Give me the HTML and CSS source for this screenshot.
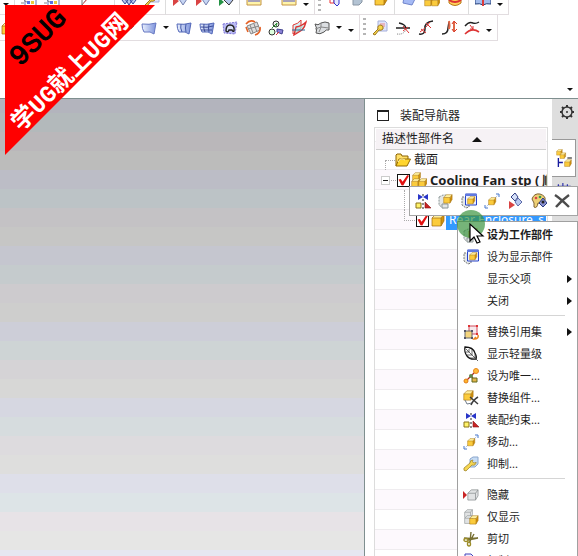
FILE: index.html
```html
<!DOCTYPE html>
<html lang="zh-CN">
<head>
<meta charset="utf-8">
<title>装配导航器</title>
<link rel="stylesheet" href="styles.css">
</head>
<body>
<svg class="defs" aria-hidden="true">
  <defs>
    <linearGradient id="blue" x1="0" y1="0" x2="1" y2="0"><stop offset="0" stop-color="#e9f0fd"/><stop offset="1" stop-color="#7d93dc"/></linearGradient>
    <g id="cube"><path d="M1 5 5 1h8l-3 4z" fill="#fff0a0"/><path d="M1 5h9v8H1z" fill="#fbcb3c"/><path d="M10 5l3-4v7l-3 5z" fill="#d0920f"/><path d="M1 5 5 1h8v7l-3 5H1zM1 5h9v8M10 5l3-4" fill="none" stroke="#a06c08" stroke-width=".7"/></g>
    <g id="ghost"><path d="M1 5 5 1h8v7l-3 5H1z" fill="#e1e3e4"/><path d="M1 5 5 1h8v7l-3 5H1zM1 5h9v8M10 5l3-4" fill="none" stroke="#8b9092" stroke-width=".9"/></g>
  </defs>
  <symbol id="i-cube" viewBox="0 0 16 16"><use href="#cube" x="1" y="1"/></symbol>
  <symbol id="i-cubes" viewBox="0 0 16 16"><use href="#cube" transform="translate(1 0) scale(.65)"/><use href="#cube" transform="translate(0 6) scale(.68)"/><use href="#cube" transform="translate(7 6) scale(.68)"/></symbol>
  <symbol id="i-folder" viewBox="0 0 16 16"><path d="M1 14V3l1-1h4l1 2h6v3" fill="#ffdf68" stroke="#8b6200"/><path d="M1 14 4 7h11.500l-3.500 7z" fill="#ffd52d" stroke="#946b00"/><path d="M3 10c2-4 5-3 7-2" stroke="#fff6bf" fill="none"/></symbol>
  <symbol id="i-surf" viewBox="0 0 16 16"><path d="M1 4q7 1 14-1l-2 11q-3-3-10-2-2-3-2-8z" fill="url(#blue)" stroke="#6577c2"/></symbol>
  <symbol id="i-surf2" viewBox="0 0 16 16"><path d="M1 4q7 1 14-1l-2 11q-3-3-10-2-2-3-2-8z" fill="url(#blue)" stroke="#5368b9"/><path d="M5 4q-1 4 1 8M10 4q-1 4 0 8" fill="none" stroke="#4259aa"/></symbol>
  <symbol id="i-mesh" viewBox="0 0 16 16"><path d="M1 4q7 1 14-1l-2 11q-3-3-10-2-2-3-2-8z" fill="url(#blue)" stroke="#5368b9"/><path d="M5 4q-1 4 1 8M10 4q-1 4 0 8M2 7q6 1 12-1M2 10q6 0 11 0" fill="none" stroke="#3a4b98"/></symbol>
  <symbol id="i-patch" viewBox="0 0 16 16"><path d="M1 4 15 2l-2 12-11-1z" fill="#b8b9f5" stroke="#8076d5" stroke-dasharray="2 1"/><path d="M4 11q0-6 4-6 5 0 4 6-1 1-2-1H7q-1 3-3 1z" fill="#d8def7" stroke="#222" stroke-width="1.400"/></symbol>
  <symbol id="i-rough" viewBox="0 0 16 16"><path d="M2 6 12 2l3 8-9 4z" fill="#ddd" stroke="#888"/><path d="M5 5l3 8M9 4l3 8M3 9l11-3" stroke="#888" fill="none"/><path d="M1 4q4-5 9-2M15 7q1 6-5 8M1 7l2 5" fill="none" stroke="#e36025" stroke-width="1.600"/></symbol>
  <symbol id="i-trans" viewBox="0 0 16 16"><circle cx="8" cy="4" r="3" fill="#eee" stroke="#333"/><circle cx="4" cy="12" r="3" fill="#dfd" stroke="#333"/><path d="M4 8l5-5-1 4" fill="none" stroke="#2a8e31"/><path d="M9 9l6 1-1 4-5-2z" fill="#8d83d8" stroke="#40418d"/><path d="M11 12l-3 3" stroke="#d33"/></symbol>
  <symbol id="i-cross" viewBox="0 0 16 16"><path d="M2 5q5-1 8-5v8q-3 5-8 6z" fill="#d7f0f5" stroke="#e13a34"/><path d="M5 7q6-1 10-5-1 5-4 8-3 2-8 5z" fill="#b3e2de" fill-opacity=".7" stroke="#dc3131" stroke-width="1.300"/><path d="M1 10h13" stroke="#2c6f9d"/></symbol>
  <symbol id="i-sheet" viewBox="0 0 16 16"><path d="M1 4q3 2 6-1 4-2 8 0v7q-3-1-5 2-4 3-8 1 2-4-1-9z" fill="#dcdfe2" stroke="#555"/><path d="M7 3q1 4-2 9M1 9l6-2 8 1" fill="none" stroke="#888"/></symbol>
  <symbol id="i-keydoc" viewBox="0 0 16 16"><path d="M6 1h7l2 2v8H6z" fill="#dfe4fb" stroke="#a5afdb"/><path d="M8 4h5M8 6h5" stroke="#e88"/><path d="M1 14l5-5q-1-4 3-4 3 1 2 4-2 2-4 1l-4 5z" fill="#f7d64a" stroke="#9b7620"/></symbol>
  <symbol id="i-trim" viewBox="0 0 16 16"><path d="M1 8h14M4 3q6 1 7 5" fill="none" stroke="#222" stroke-width="1.300"/><path d="M2 14q7 1 9-5" fill="none" stroke="#777" stroke-dasharray="1 1"/><path d="M8 6l6 7M13 7l-5 4" stroke="#d33"/></symbol>
  <symbol id="i-divide" viewBox="0 0 16 16"><path d="M1 14q6 1 6-5Q6 2 15 1" fill="none" stroke="#222" stroke-width="1.500"/><path d="M8 3l5 5M12 2l-4 5M3 9l5 4M7 8l-5 4" stroke="#d33"/></symbol>
  <symbol id="i-length" viewBox="0 0 16 16"><path d="M1 14q6 0 6-6l1-6" fill="none" stroke="#222" stroke-width="1.500"/><path d="M8 9q1-3 0-8M13 2v9" fill="none" stroke="#df6848" stroke-width="2"/><path d="M11 4l2-3 3 3M11 9l2 3 3-3" fill="none" stroke="#da3a29"/></symbol>
  <symbol id="i-bridge" viewBox="0 0 16 16"><path d="M1 6q4-5 8-3 3 1 6-1" fill="none" stroke="#222" stroke-width="1.400"/><path d="M1 14q7-7 14-2" fill="none" stroke="#d33" stroke-width="1.600"/><path d="M6 5l3 4M9 6v3H6" fill="none" stroke="#d33"/></symbol>
  <symbol id="i-list" viewBox="0 0 16 16"><path d="M4 2h11v13H4z" fill="#fff" stroke="#6474b8"/><path d="M6 5h3v3H6zM10 5h3v3h-3zM6 10h3v3H6zM10 10h3v3h-3z" fill="#586fe4"/><path d="M10 10h3v3h-3z" fill="#eacb3e"/><path d="M0 5q3 0 3 3t3 3M0 12h3" fill="none" stroke="#888"/></symbol>
  <symbol id="i-pencil" viewBox="0 0 16 16"><path d="M3 14V4M3 14l7-9 3-3" fill="none" stroke="#777"/><path d="M4 13l8-9" stroke="#e77"/></symbol>
  <symbol id="i-dia" viewBox="0 0 16 16"><path d="M4 8l4-5 4 5-4 6zM1 9l3-4 3 4-3 4zM9 9l3-4 3 4-3 4z" fill="#b9c8ef" stroke="#334a9b"/></symbol>
  <symbol id="i-diared" viewBox="0 0 16 16"><path d="M3 4l4-4 3 4-3 4z" fill="#d5e0f8" stroke="#333f84"/><path d="M7 9l3-4 4 4-4 4z" fill="#b9c9f0" stroke="#5c6aa8"/><path d="M1 8l6 4-6 4z" fill="#d94343"/></symbol>
  <symbol id="i-diahide" viewBox="0 0 16 16"><path d="M1 6l6 4-6 5z" fill="#d94343"/><path d="M7 8l4-5 4 5-4 6z" fill="#c7d6f4" stroke="#737fae"/></symbol>
  <symbol id="i-diagreen" viewBox="0 0 16 16"><path d="M1 7l5 4-5 4z" fill="#249245"/><path d="M6 9l5-6 4 6-4 5z" fill="#b6c7ed" stroke="#333"/></symbol>
  <symbol id="i-ruler" viewBox="0 0 16 16"><path d="M1 8h14v6H1z" fill="#fff4a9" stroke="#c39444"/><path d="M3 9v2M5 9v2M7 9v2M9 9v2M11 9v2M13 9v2" stroke="#4e4ec7"/></symbol>
  <symbol id="i-tubes" viewBox="0 0 16 16"><path d="M3 0h4v12H3z" fill="#fff" stroke="#e33"/><path d="M7 3h5v10l-2 2-3-3z" fill="#e4e8ff" stroke="#33c"/></symbol>
  <symbol id="i-slab" viewBox="0 0 16 16"><path d="M3 1h9v10l-3 3H3z" fill="#b3c3d3" stroke="#8996a4"/></symbol>
  <symbol id="i-bluebox" viewBox="0 0 16 16"><path d="M3 6 9 1l6 5-4 8-9-2z" fill="#a5baf5" stroke="#6f84cb"/></symbol>
  <symbol id="i-can" viewBox="0 0 16 16"><path d="M2 2h12v10q-6 5-12 0z" fill="#ffd15a" stroke="#b77716"/><path d="M2 9q6 4 12 0" fill="none" stroke="#dd3333" stroke-width="2"/><path d="M2 5q6 4 12 0" fill="none" stroke="#4c70d6" stroke-width="2"/></symbol>
  <symbol id="i-book" viewBox="0 0 16 16"><path d="M0 2q5-2 8 2 3-4 8-2v11q-5-1-8 1-3-2-8-1z" fill="#a4bded" stroke="#203c77"/><path d="M8 2v13" stroke="#dd3b3b" stroke-width="2"/></symbol>
  <symbol id="i-constraint" viewBox="0 0 16 16"><path d="M3 1v6l5-3zM13 1v6L8 4z" fill="#2835c8"/><path d="M8 1v2M8 6v2M8 10v2M8 14v2" stroke="#222"/><path d="M1 10h5v5H1z" fill="#fff36a" stroke="#897218"/><path d="M10 9v6h6z" fill="#c82424" stroke="#8b1616" stroke-width=".6"/></symbol>
  <symbol id="i-work" viewBox="0 0 16 16"><path d="M1 4l4-2h4v12l-4 1-4-3z" fill="#e3e6e6" stroke="#8b9696" stroke-dasharray="2 1"/><path d="M4 11h6v4H4z" fill="#e3e6e6" stroke="#8b9696"/><use href="#cube" transform="translate(5 1) scale(.7)"/></symbol>
  <symbol id="i-display" viewBox="0 0 16 16"><path d="M1 4h7v10l-3 1-4-3z" fill="#e4e8e8" stroke="#777" stroke-dasharray="2 1"/><path d="M4.500 1h11v11h-11z" fill="#edf2ff" stroke="#2743c9"/><path d="M4 1h12v2H4z" fill="#6079df"/><use href="#cube" transform="translate(6 3) scale(.6)"/></symbol>
  <symbol id="i-move" viewBox="0 0 16 16"><path d="M12 1h3v3M1 12v3h3" fill="none" stroke="#4675ca"/><path d="M11 5l4-4M5 11l-4 4" stroke="#70a0e2" stroke-dasharray="1 1"/><use href="#cube" transform="translate(4 4) scale(.6)"/></symbol>
  <symbol id="i-palette" viewBox="0 0 16 16"><path d="M1 6Q3 0 9 1q6 2 5 6-2 5-7 3-1 6-4 4 1-4-2-8z" fill="#eed075" stroke="#7c6030"/><circle cx="5" cy="5" r="1.300" fill="#d44"/><circle cx="9" cy="4" r="1.300" fill="#399b49"/><path d="M8 10l4-5 4 5-4 4z" fill="#8a91d1" stroke="#2a3c84"/><circle cx="12" cy="9" r="1.500" fill="#222"/></symbol>
  <symbol id="i-x" viewBox="0 0 16 16"><path d="M1 2Q7 6 15 14M15 2Q8 7 2 14" fill="none" stroke="#4c4c4c" stroke-width="2.400"/></symbol>
  <symbol id="i-refset" viewBox="0 0 16 16"><path d="M6 2h8v8H6z" fill="#f7e9ec" stroke="#d34a5a"/><path d="M5 1h2v2H5zM13 1h2v2h-2zM13 9h2v2h-2z" fill="#d33"/><path d="M2 7h7v7H2z" fill="#f5d57d" stroke="#65696c"/><path d="M1 6h2v2H1zM8 6h2v2H8zM1 13h2v2H1zM8 13h2v2H8z" fill="#556"/><path d="M15 11q1 4-4 4l2-2" fill="none" stroke="#ea841e" stroke-width="1.500"/></symbol>
  <symbol id="i-feather" viewBox="0 0 16 16"><path d="M2 1Q10 1 12 7q2 4 1 6-6 1-9-3Q1 6 2 1z" fill="#fff" stroke="#111" stroke-width="1.300"/><path d="M3 3l12 12M6 3v3H3M9 4v5H4M12 7v5H7" fill="none" stroke="#444" stroke-width=".8"/></symbol>
  <symbol id="i-unique" viewBox="0 0 16 16"><path d="M3 13l5-5 5-5M8 8l4 5" fill="none" stroke="#b52d20" stroke-width="1.300"/><circle cx="3" cy="13" r="2" fill="#ffb52c" stroke="#e07a15"/><circle cx="13" cy="3" r="2.500" fill="#ffbd3b" stroke="#e8861c"/><circle cx="8" cy="8" r="2" fill="#5e874a"/><path d="M9 10h5v4H9z" fill="#e3b54b" stroke="#60691e"/></symbol>
  <symbol id="i-replace" viewBox="0 0 16 16"><use href="#cube" transform="translate(0 0) scale(.78)"/><path d="M2 10l2 4 5-1" fill="none" stroke="#707c8a"/><path d="M7 7l8 7M15 7q-5 3-7 8" fill="none" stroke="#3d3d3d" stroke-width="1.500"/></symbol>
  <symbol id="i-suppress" viewBox="0 0 16 16"><path d="M7 3l3-2h5v7l-3 3H7z" fill="#c6dcf5" stroke="#8ba6cc"/><path d="M1 12l6-5q0-3 3-3-2 2 1 3 2 0 2-1 0 4-4 3l-6 6q-3 0-2-3z" fill="#f6d650" stroke="#a38a34" stroke-width=".8"/></symbol>
  <symbol id="i-hide" viewBox="0 0 16 16"><path d="M0 4l4 4-4 4z" fill="#c92525"/><use href="#ghost" transform="translate(4 2) scale(.85)"/></symbol>
  <symbol id="i-only" viewBox="0 0 16 16"><use href="#ghost" transform="translate(1 0) scale(.65)"/><use href="#ghost" transform="translate(1 6) scale(.65)"/><use href="#cube" transform="translate(6 6) scale(.7)"/></symbol>
  <symbol id="i-cut" viewBox="0 0 16 16"><path d="M1 7q6 1 14 0L5 9M8 1l-1 10M11 3l-5 9" fill="none" stroke="#777032" stroke-width="1.400"/><ellipse cx="3" cy="9" rx="2" ry="1.500" fill="none" stroke="#9c8c27" stroke-width="1.400"/><ellipse cx="6" cy="13" rx="1.500" ry="2" fill="none" stroke="#9c8c27" stroke-width="1.400"/></symbol>
  <symbol id="i-copy" viewBox="0 0 16 16"><path d="M2 1h6l2 2v8H2z" fill="#eef" stroke="#44b"/><path d="M6 5h6l2 2v8H6z" fill="#eef" stroke="#44b"/></symbol>
  <symbol id="i-gear" viewBox="0 0 16 16"><path d="M8 1v2M8 13v2M1 8h2M13 8h2M3 3l1.500 1.500M11.500 11.500 13 13M13 3l-1.500 1.500M4.500 11.500 3 13" stroke="#333" stroke-width="2"/><circle cx="8" cy="8" r="5" fill="none" stroke="#333" stroke-width="1.500"/><circle cx="8" cy="8" r="1" fill="#333"/></symbol>
  <symbol id="i-tree" viewBox="0 0 16 16"><use href="#cube" transform="translate(1 0) scale(.42)"/><use href="#cube" transform="translate(4 3) scale(.42)"/><path d="M3 8v8M3 12h4" stroke="#171b9e" stroke-width="1.200"/><path d="M11 8h4" stroke="#222"/><use href="#cube" transform="translate(8 9) scale(.5)"/></symbol>
  <symbol id="i-dots" viewBox="0 0 16 16"><path d="M3 1v4M7 0v4M11 1v4M2 3h12" stroke="#272caa"/><path d="M4 7h8v6H4z" fill="#ddd" stroke="#558"/></symbol>
  <symbol id="i-disk" viewBox="0 0 16 16"><path d="M3 3q5-3 10 0v9q-5 3-10 0z" fill="#d994b6" stroke="#98235c" stroke-width="1.500"/></symbol>
</svg>

<header class="ribbon">
  <div class="bar bar-clipped" role="toolbar" aria-label="标准">
    <div class="group">
      <span class="drop"></span><i class="sep"></i>
      <button class="tool" aria-label="表"><svg><use href="#i-list"/></svg></button>
      <button class="tool" aria-label="表格"><svg><use href="#i-list"/></svg></button>
      <button class="tool pad" aria-label="草图"><svg><use href="#i-pencil"/></svg></button>
      <i class="sep wide"></i>
      <button class="tool" aria-label="显示"><svg><use href="#i-dia"/></svg></button>
      <button class="tool" aria-label="编辑"><svg><use href="#i-keydoc"/></svg></button>
      <i class="sep"></i>
      <button class="tool" aria-label="隐藏"><svg><use href="#i-diahide"/></svg></button>
      <button class="tool" aria-label="反转"><svg><use href="#i-diahide"/></svg></button>
      <button class="tool" aria-label="全部显示"><svg><use href="#i-diagreen"/></svg></button>
      <i class="sep"></i>
      <button class="tool" aria-label="测量距离"><svg><use href="#i-ruler"/></svg></button>
      <button class="tool pad" aria-label="测量角度"><svg><use href="#i-ruler"/></svg></button>
      <span class="drop"></span>
    </div>
    <div class="group">
      <i class="grip"></i>
      <button class="tool" aria-label="管"><svg><use href="#i-tubes"/></svg></button>
      <button class="tool" aria-label="板"><svg><use href="#i-slab"/></svg></button>
      <button class="tool" aria-label="块"><svg><use href="#i-cube"/></svg></button>
      <i class="sep"></i>
      <button class="tool" aria-label="片体"><svg><use href="#i-bluebox"/></svg></button>
      <button class="tool" aria-label="合并"><svg><use href="#i-cubes"/></svg></button>
      <button class="tool" aria-label="圆柱"><svg><use href="#i-can"/></svg></button>
      <i class="sep"></i>
      <button class="tool" aria-label="帮助"><svg><use href="#i-book"/></svg></button>
      <span class="drop"></span>
    </div>
  </div>
  <div class="bar" role="toolbar" aria-label="曲面">
    <div class="group">
      <button class="tool lead" aria-label="拉伸"><svg><use href="#i-cube"/></svg></button>
      <span class="drop"></span>
      <button class="tool" aria-label="曲面"><svg><use href="#i-surf"/></svg></button>
      <span class="drop"></span>
      <button class="tool" aria-label="通过曲线组"><svg><use href="#i-surf2"/></svg></button>
      <button class="tool" aria-label="网格曲面"><svg><use href="#i-mesh"/></svg></button>
      <button class="tool" aria-label="N边曲面"><svg><use href="#i-patch"/></svg></button>
      <button class="tool" aria-label="扫掠"><svg><use href="#i-rough"/></svg></button>
      <button class="tool" aria-label="变换"><svg><use href="#i-trans"/></svg></button>
      <button class="tool" aria-label="修剪"><svg><use href="#i-cross"/></svg></button>
      <button class="tool" aria-label="片体"><svg><use href="#i-sheet"/></svg></button>
      <span class="drop"></span><span class="drop low"></span>
    </div>
    <div class="group">
      <i class="grip"></i>
      <button class="tool" aria-label="编辑参数"><svg><use href="#i-keydoc"/></svg></button>
      <button class="tool" aria-label="修剪曲线"><svg><use href="#i-trim"/></svg></button>
      <button class="tool" aria-label="分割曲线"><svg><use href="#i-divide"/></svg></button>
      <button class="tool" aria-label="曲线长度"><svg><use href="#i-length"/></svg></button>
      <button class="tool" aria-label="桥接曲线"><svg><use href="#i-bridge"/></svg></button>
      <span class="drop low"></span>
    </div>
  </div>
  <span class="drop overflow-mark"></span>
</header>

<main class="work">
  <section class="viewport" aria-label="图形窗口"></section>
  <section class="navigator">
    <h1 class="nav-title"><i class="pin"></i>装配导航器</h1>
    <div class="tree">
      <div class="tree-head">描述性部件名<i class="sort"></i></div>
      <div class="row"><i class="elbow root"></i><svg class="icon"><use href="#i-folder"/></svg><span class="label">截面</span></div>
      <div class="row">
        <button class="expander" aria-label="折叠"></button><i class="link"></i>
        <input type="checkbox" checked aria-label="Cooling Fan_stp"><svg class="icon"><use href="#i-cubes"/></svg><span class="label strong">Cooling Fan_stp (</span><span class="label strong order">顺</span>
      </div>
      <div class="row"><i class="stem"></i></div>
      <div class="row">
        <i class="elbow child"></i><input type="checkbox" checked aria-label="Rear Enclosure_stp"><svg class="icon"><use href="#i-cube"/></svg><span class="label selected">Rear Enclosure_s</span>
      </div>
    </div>
  </section>
  <nav class="rail" aria-label="资源条">
    <button class="rail-btn gear" aria-label="选项"><svg><use href="#i-gear"/></svg></button>
    <button class="rail-btn active" aria-label="装配导航器"><svg><use href="#i-tree"/></svg></button>
    <button class="rail-btn next" aria-label="约束导航器"><svg><use href="#i-dots"/></svg></button>
    <button class="rail-btn" aria-label="部件导航器"><svg><use href="#i-disk"/></svg></button>
  </nav>
</main>

<div class="mini" role="toolbar" aria-label="快捷工具条">
  <button aria-label="装配约束"><svg><use href="#i-constraint"/></svg></button>
  <button aria-label="设为工作部件"><svg><use href="#i-work"/></svg></button>
  <button aria-label="设为显示部件"><svg><use href="#i-display"/></svg></button>
  <button aria-label="移动"><svg><use href="#i-move"/></svg></button>
  <button aria-label="隐藏"><svg><use href="#i-diared"/></svg></button>
  <button aria-label="编辑显示"><svg><use href="#i-palette"/></svg></button>
  <button aria-label="删除"><svg><use href="#i-x"/></svg></button>
</div>

<div class="menu" role="menu">
  <button role="menuitem" class="default"><svg><use href="#i-work"/></svg>设为工作部件</button>
  <button role="menuitem"><svg><use href="#i-display"/></svg>设为显示部件</button>
  <button role="menuitem" class="sub"><svg></svg>显示父项</button>
  <button role="menuitem" class="sub"><svg></svg>关闭</button>
  <hr>
  <button role="menuitem" class="sub"><svg><use href="#i-refset"/></svg>替换引用集</button>
  <button role="menuitem"><svg><use href="#i-feather"/></svg>显示轻量级</button>
  <button role="menuitem"><svg><use href="#i-unique"/></svg>设为唯一...</button>
  <button role="menuitem"><svg><use href="#i-replace"/></svg>替换组件...</button>
  <button role="menuitem"><svg><use href="#i-constraint"/></svg>装配约束...</button>
  <button role="menuitem"><svg><use href="#i-move"/></svg>移动...</button>
  <button role="menuitem"><svg><use href="#i-suppress"/></svg>抑制...</button>
  <hr>
  <button role="menuitem"><svg><use href="#i-hide"/></svg>隐藏</button>
  <button role="menuitem"><svg><use href="#i-only"/></svg>仅显示</button>
  <button role="menuitem"><svg><use href="#i-cut"/></svg>剪切</button>
  <button role="menuitem"><svg><use href="#i-copy"/></svg>复制</button>
</div>

<svg class="pointer" viewBox="0 0 30 36" aria-hidden="true">
  <circle cx="14" cy="15" r="14" fill="#35903a" fill-opacity=".68"/>
  <path d="M13 15v17l4-4 3 6 3-1-3-6h6z" fill="#fff" stroke="#000" stroke-width="1.200"/>
</svg>

<svg class="ribbon-mark" viewBox="0 0 150 150">
  <path d="M0 0h150L0 150z" fill="#f00"/>
  <text class="mark-name" transform="translate(15 62) rotate(-45)">9SUG</text>
  <text class="mark-line" transform="translate(16 127) rotate(-45)">学UG就上UG网</text>
</svg>
</body>
</html>
```
FILE: styles.css
```css
* { box-sizing: border-box; }

body {
  margin: 0;
  height: 100vh;
  display: flex;
  flex-direction: column;
  position: relative;
  overflow: hidden;
  background: #fff;
  color: #1e1e1e;
  font: 12px/20px "Noto Sans", "Noto Sans CJK SC", sans-serif;
}

button {
  margin: 0;
  padding: 0;
  border: 0;
  background: none;
  color: inherit;
  font: inherit;
}

svg { display: block; flex: none; }
.defs { position: absolute; width: 0; height: 0; }

/* Ribbon */
.ribbon {
  flex: none;
  height: 99px;
  border-bottom: 1px solid #7f8f8f;
  position: relative;
}
.bar { display: flex; height: 26px; }
.bar-clipped { height: 15px; overflow: hidden; }
.group {
  display: flex;
  flex: none;
  align-items: center;
  padding-right: 2px;
  border-right: 1px solid #e2dde0;
  border-bottom: 1px solid #e2dde0;
}
.bar-clipped .group { align-items: flex-end; padding-bottom: 7px; }
.tool { width: 23px; flex: none; display: flex; justify-content: center; }
.tool svg { width: 16px; height: 16px; }
.tool.pad { margin-left: 12px; }
.tool.lead { width: 125px; justify-content: flex-start; }
.drop { width: 12px; flex: none; display: flex; justify-content: center; }
.drop::before {
  content: "";
  border: 3px solid transparent;
  border-top-color: #111;
  border-bottom: 0;
}
.bar-clipped .drop { align-self: center; padding-top: 2px; }
.drop.low { padding-top: 5px; }
.sep { width: 1px; height: 22px; margin: 0 2px; background: #ddd; flex: none; align-self: center; }
.sep.wide { margin-left: 16px; }
.grip { width: 3px; height: 20px; margin: 0 2px 0 3px; flex: none; align-self: center; background: repeating-linear-gradient(#b5b5b5 0 2px, transparent 2px 5px); }
.overflow-mark { position: absolute; right: 2px; bottom: 7px; }

/* Work area */
.work { flex: 1; display: flex; min-height: 0; }
.viewport {
  flex: 1;
  background: linear-gradient(
    #b3b4bd 0 14px, #b3b9bb 0 33px, #bab7ba 0 52px, #bcbcbb 0 71px,
    #bcbdc6 0 90px, #bcc3c6 0 109px, #c4c2c5 0 128px, #c6c6c5 0 147px,
    #c5c6cf 0 166px, #c5cbcd 0 185px, #cdcbce 0 204px, #cececd 0 223px,
    #cdced8 0 242px, #ced4d5 0 261px, #d5d3d6 0 280px, #d7d7d6 0 299px,
    #d6d7e1 0 318px, #d6dcde 0 337px, #dddbde 0 356px, #dededd 0 375px,
    #dedfe9 0 394px, #dde4e7 0 413px, #e7e3e7 0 432px, #e6e6e5 0 451px, #e6e7f1 0);
}
.navigator {
  width: 188px;
  flex: none;
  display: flex;
  flex-direction: column;
  padding: 5px 4px 0 9px;
  border-left: 1px solid #7f8f8f;
}
.nav-title {
  display: flex;
  align-items: center;
  gap: 11px;
  height: 23px;
  margin: 0;
  padding-left: 3px;
  font-size: 12px;
  font-weight: 400;
}
.pin { width: 12px; height: 11px; border: 1px solid #222; border-top-width: 2px; }
.tree {
  flex: 1;
  min-height: 0;
  overflow: hidden;
  padding: 1px 1px 0;
  border: 1px solid #dcdcdc;
  border-bottom: 0;
  background: repeating-linear-gradient(#fff 0 19px, #efecef 19px 20px, #fdf9fd 20px 39px, #efecef 39px 40px) 0 22px;
}
.tree-head {
  display: flex;
  align-items: center;
  gap: 18px;
  height: 21px;
  padding-left: 6px;
  background: #f6f2f5;
  border-bottom: 1px solid #cfcfcf;
}
.sort { border: 5px solid transparent; border-top: 0; border-bottom-color: #111; }
.row { display: flex; align-items: center; height: 20px; white-space: nowrap; }
.icon { width: 16px; height: 16px; }
.label { padding-left: 3px; }
.strong { font-size: 13px; font-weight: 700; }
.order { width: 12px; overflow: hidden; flex: none; }
.selected { flex: 1; overflow: hidden; background: #39f; color: #fff; }

.elbow { flex: none; border: 0 dotted #aaa; }
.root { width: 10px; height: 10px; margin-left: 9px; align-self: flex-end; border-width: 1px 0 0 1px; }
.child { width: 11px; height: 11px; margin: 0 1px 0 28px; align-self: flex-start; border-width: 0 0 1px 1px; }
.stem { height: 20px; margin-left: 28px; border-left: 1px dotted #aaa; }
.link { width: 5px; flex: none; margin: 0 1px; border-top: 1px dotted #aaa; }
.expander {
  width: 9px;
  height: 9px;
  margin-left: 5px;
  flex: none;
  border: 1px solid #ccc;
  background: linear-gradient(#222, #222) center / 5px 1px no-repeat #fff;
}
input[type="checkbox"] {
  appearance: none;
  width: 13px;
  height: 13px;
  margin: 0 1px 0 0;
  flex: none;
  border: 1px solid #111;
  background: #fff;
}
input[type="checkbox"]::before {
  content: "";
  display: block;
  height: 11px;
  background: #e21010;
  clip-path: polygon(5% 45%, 25% 40%, 42% 65%, 85% 5%, 100% 12%, 48% 100%, 32% 98%);
}

/* Resource rail */
.rail { width: 26px; flex: none; background: #dedede; }
.rail-btn { width: 24px; height: 36px; display: flex; align-items: center; justify-content: center; }
.rail-btn svg { width: 18px; height: 18px; }
.rail-btn.gear { width: 30px; height: 40px; align-items: flex-start; padding-top: 5px; }
.rail-btn.gear svg { width: 16px; height: 16px; }
.rail-btn.active { height: 38px; background: #fff; border: 1px solid #999; border-left: 0; }
.rail-btn.next { align-items: flex-start; padding-top: 6px; }

/* Popups */
.mini, .menu, .pointer, .ribbon-mark { position: absolute; }
.mini {
  top: 186px;
  right: 0;
  width: 169px;
  display: flex;
  align-items: center;
  justify-content: space-between;
  height: 30px;
  padding: 0 7px 0 5px;
  border: 1px solid #a5a5a5;
  background: #fff;
}
.mini svg { width: 16px; height: 16px; }

.menu {
  top: 221px;
  right: 0;
  width: 121px;
  padding: 2px 0;
  border: 1px solid #a0a0a0;
  background: #fff;
  font-size: 11px;
}
.menu button {
  display: flex;
  align-items: center;
  gap: 8px;
  width: 100%;
  height: 22px;
  padding: 0 5px;
  white-space: nowrap;
}
.menu svg { width: 16px; height: 16px; }
.menu .default { font-weight: 700; }
.menu .sub::after {
  content: "";
  margin-left: auto;
  border: 4px solid transparent;
  border-left: 5px solid #111;
  border-right: 0;
}
.menu hr { margin: 3px 12px 5px; border: 0; border-top: 1px solid #d5d5d5; }

.pointer { top: 209px; left: 457px; width: 30px; height: 36px; }
.ribbon-mark { top: 5px; left: 5px; width: 150px; height: 150px; }
.mark-name { font: 28px "Liberation Mono", monospace; fill: #000; stroke: #000; stroke-width: 1px; }
.mark-line { font: 700 24px "Liberation Mono", "Noto Sans CJK SC", monospace; fill: #fff; }
```
